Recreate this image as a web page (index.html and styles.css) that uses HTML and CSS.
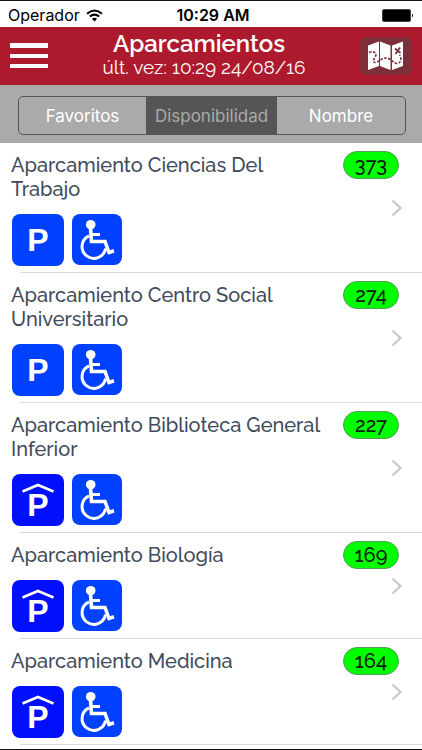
FILE: index.html
```html
<!DOCTYPE html>
<html lang="es">
<head>
<meta charset="utf-8">
<meta name="viewport" content="width=device-width, initial-scale=1">
<title>Aparcamientos</title>
<link rel="stylesheet" href="styles.css">
</head>
<body>
<svg class="defs" aria-hidden="true">
  <symbol id="wheelchair" viewBox="0 0 52 52">
    <rect x="0" y="0" width="50" height="51" rx="8" fill="#0040ff"/>
    <circle cx="18.700" cy="10.700" r="4.800" fill="#fff"/>
    <g fill="none" stroke="#fff">
      <path d="M18.500 14 L19.500 27.500 H33 L37 38.500 L42 36.800" stroke-width="3.600"/>
      <path d="M19 20.500 H28" stroke-width="3"/>
      <path d="M17 21.800 A11.800 11.800 0 1 0 33.500 34.500" stroke-width="3"/>
    </g>
  </symbol>
  <symbol id="chevron" viewBox="0 0 12 18">
    <path d="M1.500 1.500 L9.500 9 L1.500 16.500" fill="none" stroke="#c7c7cc" stroke-width="2.200"/>
  </symbol>
  <symbol id="roof" viewBox="0 0 32 10">
    <path d="M0.500 8.500 L16 2 L31.500 8.500" fill="none" stroke="#fff" stroke-width="2.600"/>
  </symbol>
</svg>

<div class="status">
  <span class="carrier">Operador
    <svg width="17" height="13" viewBox="0 0 17 13" fill="none" stroke="#000" stroke-width="2" aria-hidden="true">
      <path d="M1 4.800 Q8.500 -1.800 16 4.800"/>
      <path d="M3.800 7.600 Q8.500 3.600 13.200 7.600"/>
      <path d="M8.500 12.500 L5.900 9.700 Q8.500 7.700 11.100 9.700 Z" fill="#000" stroke="none"/>
    </svg>
  </span>
  <span class="clock">10:29 AM</span>
  <svg class="battery" width="32" height="13" viewBox="0 0 32 13" aria-hidden="true">
    <rect x="0.500" y="0.500" width="28" height="12" rx="1.500" fill="#000" stroke="#444"/>
    <path d="M30 4.500 Q32 6.500 30 8.500 Z"/>
  </svg>
</div>

<header class="bar">
  <button class="menu" type="button" aria-label="Menú">
    <svg width="38" height="26" viewBox="0 0 38 26" fill="#fff" aria-hidden="true">
      <path d="M0 0H38V5H0Z M0 11H38V15H0Z M0 21H38V25H0Z"/>
    </svg>
  </button>
  <div class="heading">
    <h1>Aparcamientos</h1>
    <p>últ. vez: 10:29 24/08/16</p>
  </div>
  <button class="map" type="button" aria-label="Mapa">
    <svg width="36" height="30" viewBox="0 0 36 30" aria-hidden="true">
      <path d="M0 4.500 L11 0.500 V25 L0 29 Z M12 0.500 L22.500 4.500 V29 L12 25 Z M24 4.500 L35 0.500 V25 L24 29 Z" fill="#fff"/>
      <path d="M1 11.500 C6 9.500 9 12 7.500 15.500 C5 19 4 22 8 21.500 C12 20 14 17 18.500 17 C23 17.500 25 22 29 22.500 C33 22.500 34 17 31.500 14" fill="none" stroke="#7c2f39" stroke-width="1.600" stroke-dasharray="2.600 1.400"/>
      <path d="M27 7.500 L32.500 12 M32 6.500 L27.500 13" stroke="#7c2f39" stroke-width="1.800"/>
    </svg>
  </button>
</header>

<nav class="sort">
  <div class="segments">
    <button type="button">Favoritos</button>
    <button type="button" class="active" aria-pressed="true">Disponibilidad</button>
    <button type="button">Nombre</button>
  </div>
</nav>

<main>
  <ul class="list">
    <li><a class="row" href="#">
      <h2>Aparcamiento Ciencias Del Trabajo</h2>
      <span class="icons"><span class="parking">P</span><svg width="52" height="52"><use href="#wheelchair"/></svg></span>
      <span class="badge">373</span>
      <svg class="chevron" width="12" height="18"><use href="#chevron"/></svg>
    </a></li>
    <li><a class="row" href="#">
      <h2>Aparcamiento Centro Social Universitario</h2>
      <span class="icons"><span class="parking">P</span><svg width="52" height="52"><use href="#wheelchair"/></svg></span>
      <span class="badge">274</span>
      <svg class="chevron" width="12" height="18"><use href="#chevron"/></svg>
    </a></li>
    <li><a class="row" href="#">
      <h2>Aparcamiento Biblioteca General Inferior</h2>
      <span class="icons"><span class="parking covered"><svg width="32" height="10"><use href="#roof"/></svg>P</span><svg width="52" height="52"><use href="#wheelchair"/></svg></span>
      <span class="badge">227</span>
      <svg class="chevron" width="12" height="18"><use href="#chevron"/></svg>
    </a></li>
    <li><a class="row" href="#">
      <h2>Aparcamiento Biología</h2>
      <span class="icons"><span class="parking covered"><svg width="32" height="10"><use href="#roof"/></svg>P</span><svg width="52" height="52"><use href="#wheelchair"/></svg></span>
      <span class="badge">169</span>
      <svg class="chevron" width="12" height="18"><use href="#chevron"/></svg>
    </a></li>
    <li><a class="row" href="#">
      <h2>Aparcamiento Medicina</h2>
      <span class="icons"><span class="parking covered"><svg width="32" height="10"><use href="#roof"/></svg>P</span><svg width="52" height="52"><use href="#wheelchair"/></svg></span>
      <span class="badge">164</span>
      <svg class="chevron" width="12" height="18"><use href="#chevron"/></svg>
    </a></li>
  </ul>
</main>
</body>
</html>
```
FILE: styles.css
```css
* {
  box-sizing: border-box;
}

body {
  margin: 0;
  min-height: 100vh;
  border-top: 1px solid #111;
  border-bottom: 1px solid #111;
  background: #fff;
  font-family: Raleway, Lato, sans-serif;
}

h1, h2, p, ul {
  margin: 0;
  padding: 0;
}

button {
  margin: 0;
  padding: 0;
  border: 0;
  background: none;
  font: inherit;
  color: inherit;
}

svg {
  display: block;
}

.defs {
  display: none;
}

/* Status bar */
.status {
  display: grid;
  grid-template-columns: 1fr auto 1fr;
  align-items: center;
  height: 26px;
  padding: 2px 8px 0;
  font: 16px/24px Inter, sans-serif;
  color: #000;
}

.carrier {
  display: flex;
  align-items: center;
  gap: 6px;
}

.clock {
  padding-left: 4px;
  font-weight: 600;
}

.battery {
  justify-self: end;
}

/* Title bar */
.bar {
  display: grid;
  grid-template-columns: 52px 1fr 52px;
  align-items: center;
  height: 58px;
  padding: 0 10px;
  background: #ae1a2d;
  color: #fff;
  text-align: center;
}

.heading {
  padding: 0 22px 2px 8px;
}

.heading h1 {
  padding-right: 10px;
  font-size: 24px;
  line-height: 24px;
  font-weight: 600;
}

.heading p {
  font-size: 19px;
  line-height: 23px;
}

.map {
  display: grid;
  place-items: center;
  height: 38px;
  border: 1px solid #8b2936;
  border-radius: 5px;
  background: #7c2f39;
}

/* Sort selector */
.sort {
  height: 58px;
  padding: 11px 16px 8px 18px;
  background: #aaa;
}

.segments {
  display: grid;
  grid-template-columns: 127fr 131fr 128fr;
  height: 39px;
  overflow: hidden;
  border: 1px solid #555;
  border-radius: 5px;
  font: 17px/36px Inter, sans-serif;
  color: #fff;
}

.segments .active {
  background: #555;
  color: #aaa;
}

/* Car park list */
.list {
  list-style: none;
}

.list li::after {
  content: "";
  display: block;
  height: 1px;
  margin-left: 20px;
  background: #dcdcde;
}

.row {
  display: grid;
  grid-template-columns: 1fr 79px;
  padding-left: 11px;
  color: #3f4b5b;
  text-decoration: none;
}

.row h2 {
  grid-column: 1;
  padding: 10px 16px 0 0;
  font-size: 20px;
  line-height: 24px;
  font-weight: 500;
}

.icons {
  grid-column: 1;
  display: flex;
  gap: 8px;
  padding: 13px 0 6px 1px;
}

.parking {
  display: flex;
  flex-direction: column;
  align-items: center;
  justify-content: center;
  width: 52px;
  height: 52px;
  border-radius: 8px;
  background: #0040ff;
  color: #fff;
  font: bold 32px/32px "Liberation Sans", sans-serif;
}

.covered {
  padding-top: 4px;
  background: #0010ff;
}

.covered svg {
  margin-bottom: -4px;
}

.badge {
  grid-column: 2;
  grid-row: 1 / 3;
  width: 56px;
  height: 28px;
  margin-top: 8px;
  border: 1px solid #5a9a5a;
  border-radius: 14px;
  background: #0f0;
  color: #102010;
  font-size: 20px;
  line-height: 26px;
  font-weight: 500;
  text-align: center;
}

.chevron {
  grid-column: 2;
  grid-row: 1 / 3;
  align-self: center;
  margin-left: 48px;
}
```
